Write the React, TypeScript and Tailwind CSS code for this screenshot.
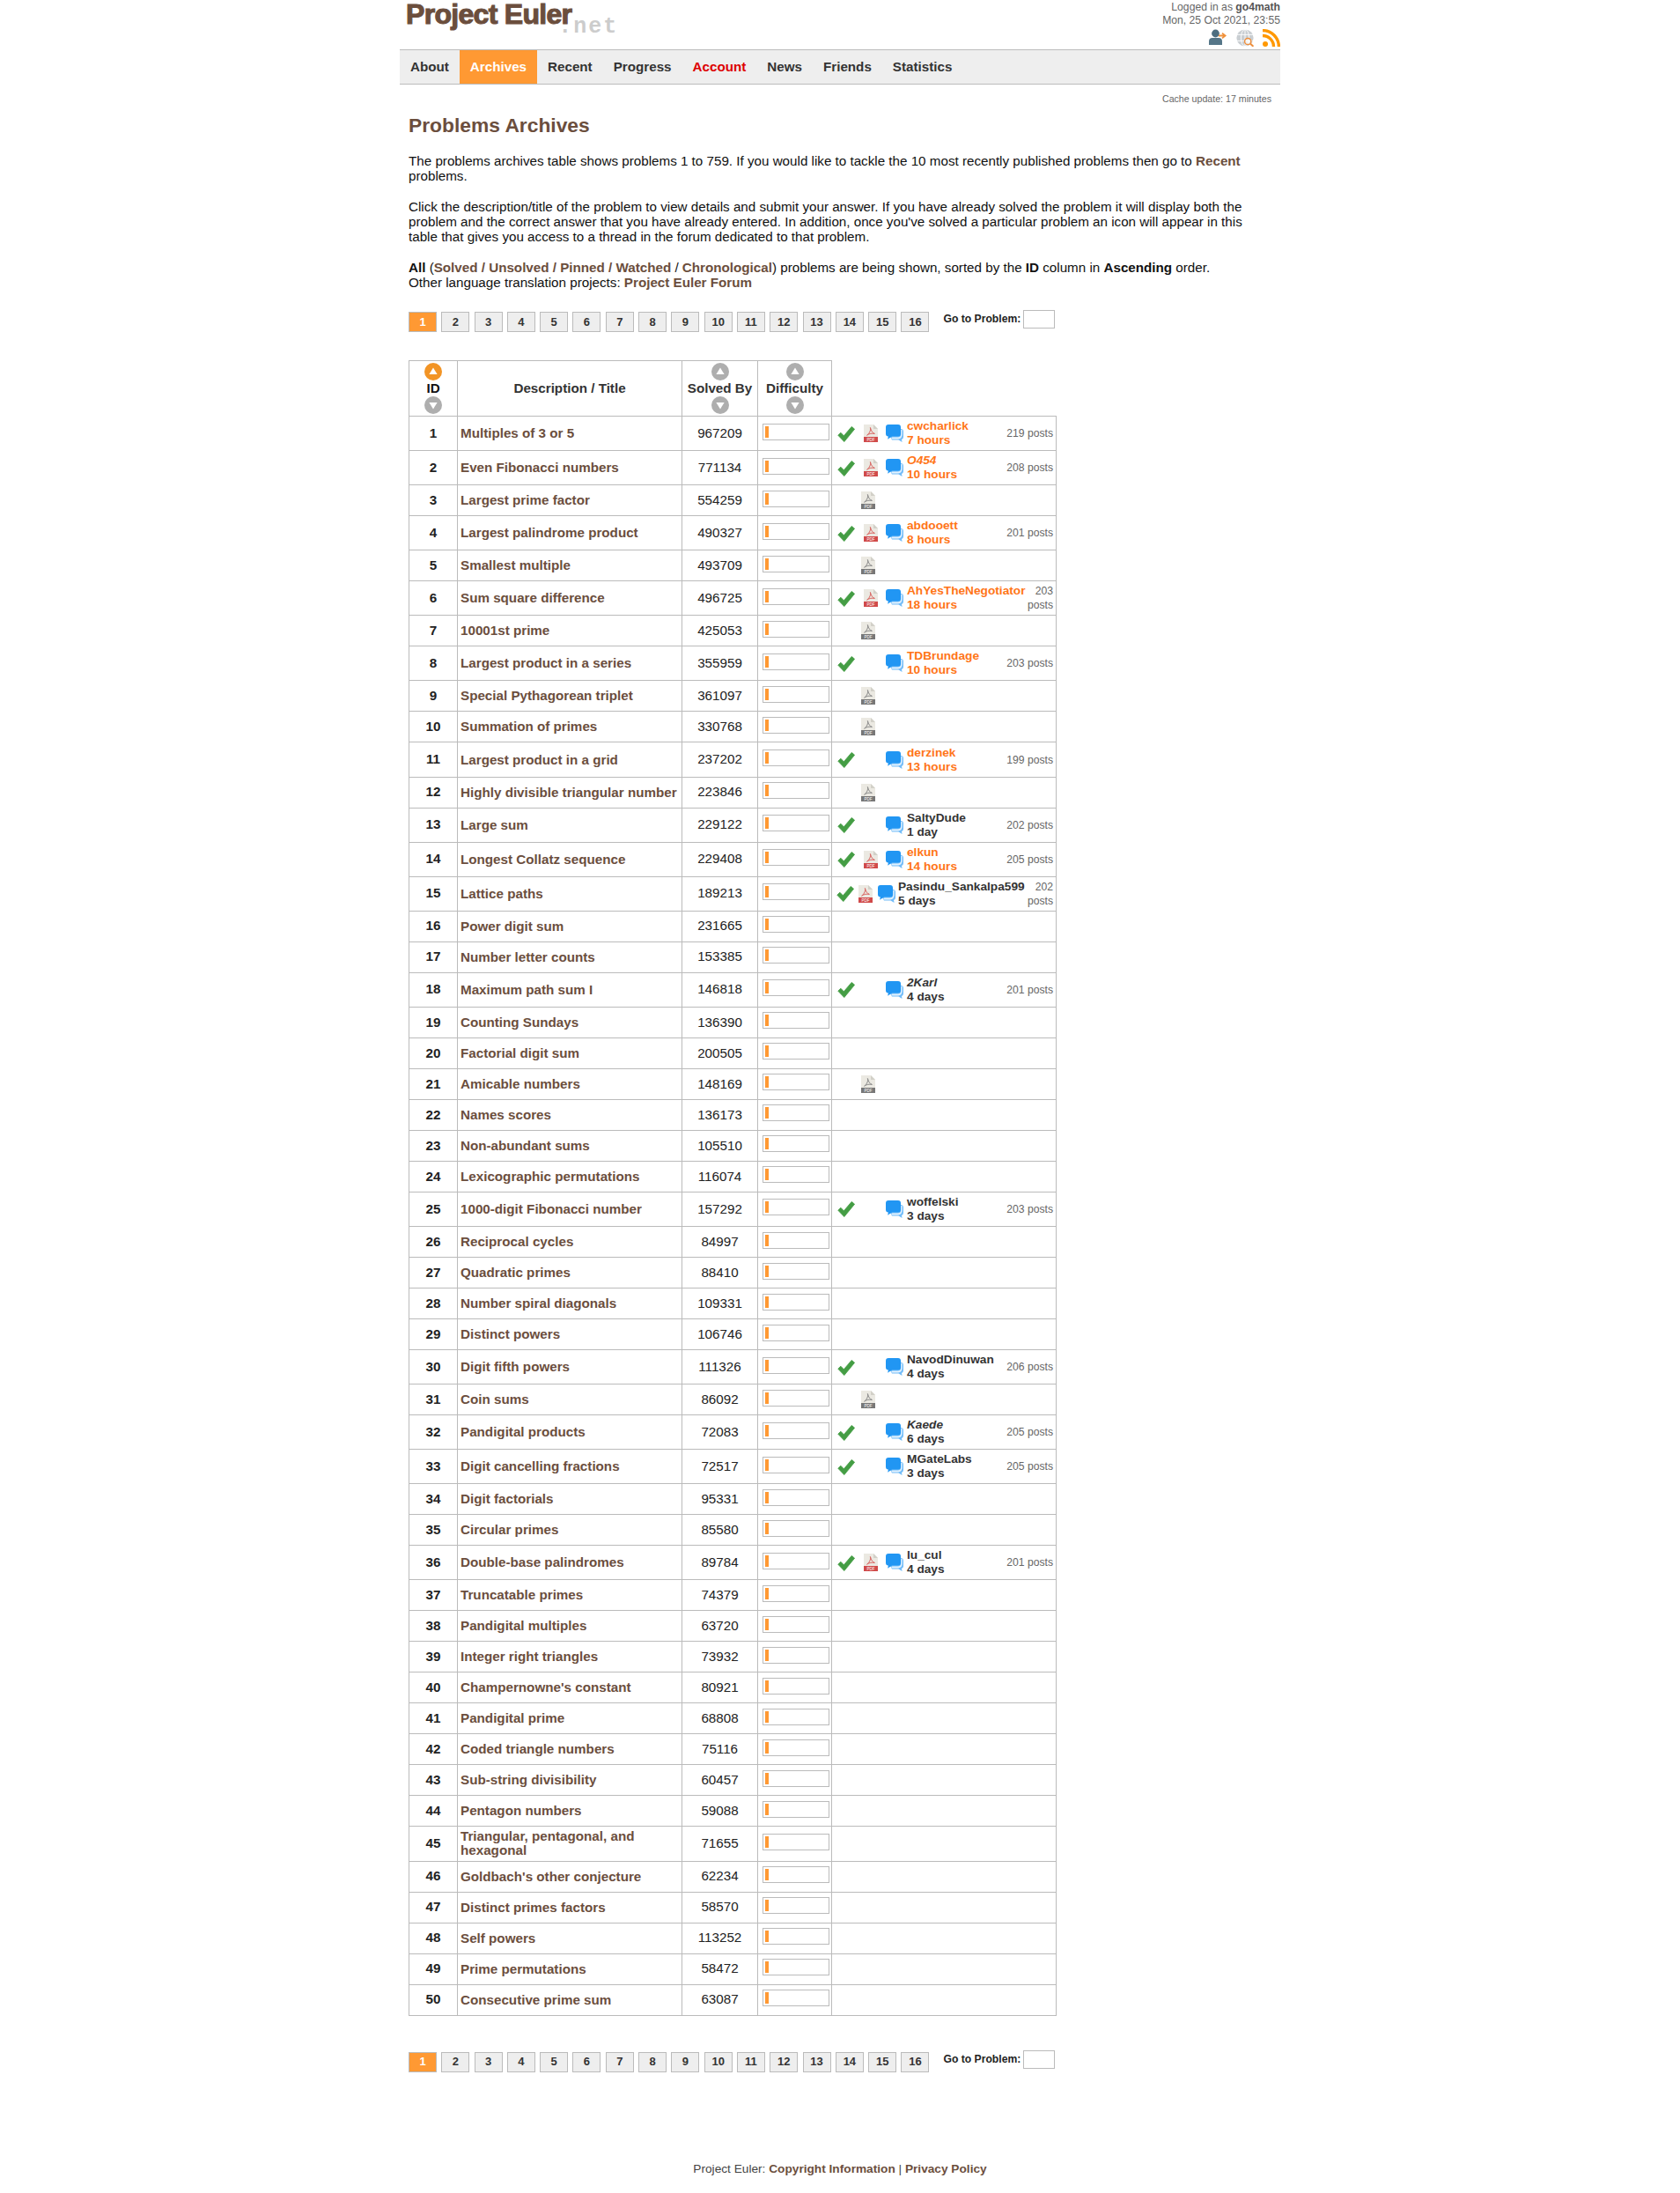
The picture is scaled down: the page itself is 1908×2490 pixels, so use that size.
import React from "react";

type S = { pdf?: "r" | "g"; check?: boolean; name?: string; time?: string; posts?: number; it?: boolean; dark?: boolean; wrap?: boolean; shift?: boolean };
type R = [string, string, S?];

const rows: R[] = [
  ["Multiples of 3 or 5", "967209", { check: true, pdf: "r", name: "cwcharlick", time: "7 hours", posts: 219 }],
  ["Even Fibonacci numbers", "771134", { check: true, pdf: "r", name: "O454", time: "10 hours", posts: 208, it: true }],
  ["Largest prime factor", "554259", { pdf: "g" }],
  ["Largest palindrome product", "490327", { check: true, pdf: "r", name: "abdooett", time: "8 hours", posts: 201 }],
  ["Smallest multiple", "493709", { pdf: "g" }],
  ["Sum square difference", "496725", { check: true, pdf: "r", name: "AhYesTheNegotiator", time: "18 hours", posts: 203, wrap: true }],
  ["10001st prime", "425053", { pdf: "g" }],
  ["Largest product in a series", "355959", { check: true, name: "TDBrundage", time: "10 hours", posts: 203 }],
  ["Special Pythagorean triplet", "361097", { pdf: "g" }],
  ["Summation of primes", "330768", { pdf: "g" }],
  ["Largest product in a grid", "237202", { check: true, name: "derzinek", time: "13 hours", posts: 199 }],
  ["Highly divisible triangular number", "223846", { pdf: "g" }],
  ["Large sum", "229122", { check: true, name: "SaltyDude", time: "1 day", posts: 202, dark: true }],
  ["Longest Collatz sequence", "229408", { check: true, pdf: "r", name: "elkun", time: "14 hours", posts: 205 }],
  ["Lattice paths", "189213", { check: true, pdf: "r", name: "Pasindu_Sankalpa599", time: "5 days", posts: 202, dark: true, wrap: true, shift: true }],
  ["Power digit sum", "231665"],
  ["Number letter counts", "153385"],
  ["Maximum path sum I", "146818", { check: true, name: "2Karl", time: "4 days", posts: 201, it: true, dark: true }],
  ["Counting Sundays", "136390"],
  ["Factorial digit sum", "200505"],
  ["Amicable numbers", "148169", { pdf: "g" }],
  ["Names scores", "136173"],
  ["Non-abundant sums", "105510"],
  ["Lexicographic permutations", "116074"],
  ["1000-digit Fibonacci number", "157292", { check: true, name: "woffelski", time: "3 days", posts: 203, dark: true }],
  ["Reciprocal cycles", "84997"],
  ["Quadratic primes", "88410"],
  ["Number spiral diagonals", "109331"],
  ["Distinct powers", "106746"],
  ["Digit fifth powers", "111326", { check: true, name: "NavodDinuwan", time: "4 days", posts: 206, dark: true }],
  ["Coin sums", "86092", { pdf: "g" }],
  ["Pandigital products", "72083", { check: true, name: "Kaede", time: "6 days", posts: 205, it: true, dark: true }],
  ["Digit cancelling fractions", "72517", { check: true, name: "MGateLabs", time: "3 days", posts: 205, dark: true }],
  ["Digit factorials", "95331"],
  ["Circular primes", "85580"],
  ["Double-base palindromes", "89784", { check: true, pdf: "r", name: "lu_cul", time: "4 days", posts: 201, dark: true }],
  ["Truncatable primes", "74379"],
  ["Pandigital multiples", "63720"],
  ["Integer right triangles", "73932"],
  ["Champernowne's constant", "80921"],
  ["Pandigital prime", "68808"],
  ["Coded triangle numbers", "75116"],
  ["Sub-string divisibility", "60457"],
  ["Pentagon numbers", "59088"],
  ["Triangular, pentagonal, and hexagonal", "71655"],
  ["Goldbach's other conjecture", "62234"],
  ["Distinct primes factors", "58570"],
  ["Self powers", "113252"],
  ["Prime permutations", "58472"],
  ["Consecutive prime sum", "63087"],
];

function Check() {
  return (
    <svg width="20" height="20" viewBox="0 0 20 20" className="block shrink-0">
      <path d="M0.8 11.2 L3.8 8.2 L7.4 11.8 L16.2 1.4 L19.6 4.2 L7.8 18.6 Z" fill="#449d44" stroke="#449d44" strokeWidth="0.8" strokeLinejoin="round" />
    </svg>
  );
}

function Pdf({ grey }: { grey?: boolean }) {
  const band = grey ? "#777777" : "#d04a4a";
  const mark = grey ? "#8a8a8a" : "#d9635f";
  return (
    <svg width="16" height="20" viewBox="0 0 16 20" className="block shrink-0">
      <path d="M0 0 H11 L16 5 V20 H0 Z" fill="#ebe9e2" />
      <path d="M11 0 L16 5 H11 Z" fill="#d2d0c8" />
      <rect x="0" y="14" width="16" height="6" fill={band} />
      <text x="8" y="19" textAnchor="middle" fontSize="4.6" fill="#ffffff" fontFamily="Liberation Sans, sans-serif">PDF</text>
      <path d="M7.4 3.5 C8 6.5 7 9.5 3.6 12.2 C6.5 10.2 9 9.8 12.4 10.4 C10 9.6 8.4 7.5 7.4 3.5 Z" fill="none" stroke={mark} strokeWidth="1" strokeLinejoin="round" />
    </svg>
  );
}

function Forum() {
  return (
    <svg width="20" height="20" viewBox="0 0 20 20" className="block shrink-0">
      <path d="M12 5 H17 Q20 5 20 8 V14 Q20 16.5 18 17 L18.6 20 L14.5 17.5 H7 L5 14 Z" fill="#72bcf8" />
      <path d="M17.2 6 V11 Q17.2 14.6 13.6 14.6 H7.4 L6 16 L7.6 16.4 H14 Q18.6 16.4 18.6 11 V6 Z" fill="#ffffff" opacity="0.8" />
      <path d="M3 0 H14 Q17 0 17 3 V10.5 Q17 13.5 14 13.5 H7 L2.2 16.8 L2.8 13.5 Q0 13.5 0 10.5 V3 Q0 0 3 0 Z" fill="#2196f3" />
    </svg>
  );
}

function Arrow({ up, on }: { up?: boolean; on?: boolean }) {
  return (
    <svg width="20" height="20" viewBox="0 0 20 20" className="block mx-auto">
      <circle cx="10" cy="10" r="10" fill={on ? "#f29425" : "#aeaeae"} />
      <path d={up ? "M10 5.6 L14.6 13 H5.4 Z" : "M10 14.4 L14.6 7 H5.4 Z"} fill="#ffffff" />
    </svg>
  );
}

function Person() {
  return (
    <svg width="21" height="20" viewBox="0 0 21 20" className="block">
      <circle cx="7.5" cy="5" r="4.4" fill="#4d6e80" />
      <path d="M0 18 V14 Q0 10 4 10 H11 Q15 10 15 14 V18 Z" fill="#557688" />
      <path d="M11 7.5 H17.5 M15 4.6 L18.6 7.5 L15 10.4" fill="none" stroke="#f0913a" strokeWidth="1.8" />
    </svg>
  );
}

function Globe() {
  return (
    <svg width="20" height="20" viewBox="0 0 20 20" className="block">
      <circle cx="10" cy="10" r="9.6" fill="#c9ced2" />
      <g fill="none" stroke="#ffffff" strokeWidth="0.9">
        <ellipse cx="10" cy="10" rx="4.6" ry="9.6" />
        <path d="M10 0.4 V19.6 M1 6.4 H19 M1 13.4 H19" />
      </g>
      <circle cx="13.2" cy="14" r="3.6" fill="#ffffff" fillOpacity="0.7" stroke="#ee8f3d" strokeWidth="1.5" />
      <path d="M16 16.6 L19.4 19.8" stroke="#ee8f3d" strokeWidth="2" />
    </svg>
  );
}

function Rss() {
  return (
    <svg width="20" height="20" viewBox="0 0 20 20" className="block">
      <circle cx="3" cy="17" r="3" fill="#ff9800" />
      <path d="M0 7.5 A12.5 12.5 0 0 1 12.5 20" fill="none" stroke="#ff9800" strokeWidth="3.4" />
      <path d="M0 1.6 A18.4 18.4 0 0 1 18.4 20" fill="none" stroke="#ff9800" strokeWidth="3.4" />
    </svg>
  );
}

function Pager() {
  const pages = Array.from({ length: 16 }, (_, i) => i + 1);
  return (
    <div className="flex items-start">
      <div className="flex gap-[5.3px] mt-[2px]">
        {pages.map((p) => (
          <div
            key={p}
            className={
              p === 1
                ? "w-[32px] h-[23px] flex items-center justify-center border border-[#bbbbbb] bg-[#ff9933] text-white text-[13px] font-bold"
                : "w-[32px] h-[23px] flex items-center justify-center border border-[#bbbbbb] bg-[#eeeeee] text-[#333333] text-[13px] font-bold"
            }
          >
            {p}
          </div>
        ))}
      </div>
      <div className="flex items-center ml-[16px] text-[12.16px] font-bold text-[#222222]">
        <span>Go to Problem:</span>
        <div className="w-[36px] h-[21px] ml-[3px] border border-[#bbbbbb] bg-white" />
      </div>
    </div>
  );
}

function Status({ s }: { s?: S }) {
  if (!s) return null;
  if (!s.check) {
    return (
      <div className="pl-[33px] flex items-center">
        <Pdf grey />
      </div>
    );
  }
  const color = s.dark ? "text-[#333333]" : "text-[#ff7518]";
  return (
    <div className={s.shift ? "flex items-center pl-[5px] pr-[3px]" : "flex items-center pl-[6px] pr-[3px]"}>
      <div className="mt-[1px] shrink-0">
        <Check />
      </div>
      <div className={s.shift ? "w-[21px] pl-[5px] shrink-0" : "w-[26px] pl-[10px] shrink-0"}>{s.pdf === "r" && <Pdf />}</div>
      <div className={s.shift ? "ml-[6px] shrink-0" : "ml-[9px] shrink-0"}>
        <Forum />
      </div>
      <div className={s.shift ? "ml-[3px] text-[13.68px] font-bold leading-[16px] whitespace-nowrap " + color : "ml-[4px] text-[13.68px] font-bold leading-[16px] whitespace-nowrap " + color}>
        <div className={s.it ? "italic" : ""}>{s.name}</div>
        <div>{s.time}</div>
      </div>
      <div className="flex-1 text-right text-[12.16px] leading-[16px] text-[#666666]">
        {s.wrap ? (
          <>
            {s.posts}
            <br />
            posts
          </>
        ) : (
          `${s.posts} posts`
        )}
      </div>
    </div>
  );
}

export default function App() {
  return (
    <div className="w-[1000px] h-[2490px] mx-auto text-[15.2px] text-[#111111] font-['Liberation_Sans',Arial,sans-serif] flex flex-col">
      <header className="h-[56px] flex justify-between shrink-0">
        <div className="flex items-start pl-[7px]">
          <span className="text-[32px] leading-[33px] font-bold text-[#6b4e3d] tracking-[-0.7px] [-webkit-text-stroke:1.1px_#6b4e3d]">Project Euler</span>
          <span className="font-['Liberation_Mono',monospace] font-bold text-[25px] leading-[26px] text-[#cccccc] mt-[18px] -ml-[15px] tracking-[2px]">.net</span>
        </div>
        <div className="flex flex-col items-end text-[12.16px] leading-[15px] text-[#666666] pt-[1px]">
          <div>
            Logged in as <b className="text-[#555555]">go4math</b>
          </div>
          <div>Mon, 25 Oct 2021, 23:55</div>
          <div className="flex items-center gap-[10px] mt-[2px]">
            <Person />
            <Globe />
            <Rss />
          </div>
        </div>
      </header>

      <nav className="h-[40px] flex bg-[#eeeeee] border-y border-[#bbbbbb] text-[15.2px] font-bold text-[#333333] shrink-0">
        {["About", "Archives", "Recent", "Progress", "Account", "News", "Friends", "Statistics"].map((n) => (
          <div
            key={n}
            className={
              n === "Archives"
                ? "px-[12px] flex items-center bg-[#ff9933] text-white"
                : n === "Account"
                ? "px-[12px] flex items-center text-[#dd0000]"
                : "px-[12px] flex items-center"
            }
          >
            {n}
          </div>
        ))}
      </nav>

      <div className="text-right text-[10.64px] leading-[14px] text-[#666666] pr-[10px] mt-[9px]">Cache update: 17 minutes</div>

      <main className="px-[10px]">
        <h2 className="text-[22.8px] leading-[28px] font-bold text-[#6b4e3d] mt-[9px] mb-[18px]">Problems Archives</h2>
        <p className="mb-[18px] leading-[17px]">
          The problems archives table shows problems 1 to 759. If you would like to tackle the 10 most recently published problems then go to <b className="text-[#6b4e3d]">Recent</b> problems.
        </p>
        <p className="mb-[18px] leading-[17px]">
          Click the description/title of the problem to view details and submit your answer. If you have already solved the problem it will display both the problem and the correct answer that you have already entered. In addition, once you've solved a particular problem an icon will appear in this table that gives you access to a thread in the forum dedicated to that problem.
        </p>
        <p className="mb-[23px] leading-[17px]">
          <b>All</b> (<b className="text-[#6b4e3d]">Solved / Unsolved / Pinned / Watched</b> / <b className="text-[#6b4e3d]">Chronological</b>) problems are being shown, sorted by the <b>ID</b> column in <b>Ascending</b> order.
          <br />
          Other language translation projects: <b className="text-[#6b4e3d]">Project Euler Forum</b>
        </p>

        <Pager />

        <table className="mt-[32px] border-collapse table-fixed w-[735px]">
          <colgroup>
            <col className="w-[55px]" />
            <col className="w-[255px]" />
            <col className="w-[86px]" />
            <col className="w-[84px]" />
            <col className="w-[255px]" />
          </colgroup>
          <thead>
            <tr className="text-[#333333] font-bold leading-[18px]">
              <th className="border border-[#bbbbbb] py-[2px] font-bold text-[#111111]">
                <Arrow up on />
                ID
                <Arrow />
              </th>
              <th className="border border-[#bbbbbb] py-[2px] font-bold">Description / Title</th>
              <th className="border border-[#bbbbbb] py-[2px] font-bold">
                <Arrow up />
                Solved By
                <Arrow />
              </th>
              <th className="border border-[#bbbbbb] py-[2px] font-bold">
                <Arrow up />
                Difficulty
                <Arrow />
              </th>
              <th className="border-b border-l border-[#bbbbbb]"></th>
            </tr>
          </thead>
          <tbody>
            {rows.map(([title, solved, s], i) => {
              const tall = !!(s && s.name) || i === 44;
              return (
                <tr key={i} className={tall ? "h-[39.1px]" : "h-[35px]"}>
                  <td className="border border-[#bbbbbb] text-center font-bold text-[#222222]">{i + 1}</td>
                  <td className="border border-[#bbbbbb] px-[3px] font-bold text-[#6b4e3d] leading-[16px]">{title}</td>
                  <td className="border border-[#bbbbbb] text-center text-[#222222]">{solved}</td>
                  <td className="border border-[#bbbbbb] p-0">
                    <div className="ml-[5px] mb-[4px] w-[76px] h-[19px] border border-[#bbbbbb] pl-[2px] py-[2px] bg-white">
                      <div className="w-[4px] h-full bg-[#ff9933]" />
                    </div>
                  </td>
                  <td className="border border-[#bbbbbb] p-0">
                    <Status s={s} />
                  </td>
                </tr>
              );
            })}
          </tbody>
        </table>

        <div className="mt-[39px]">
          <Pager />
        </div>
      </main>

      <footer className="mt-[102px] text-center text-[13.68px] leading-[16px] text-[#444444]">
        Project Euler: <b className="text-[#6b4e3d]">Copyright Information</b> | <b className="text-[#6b4e3d]">Privacy Policy</b>
      </footer>
    </div>
  );
}
